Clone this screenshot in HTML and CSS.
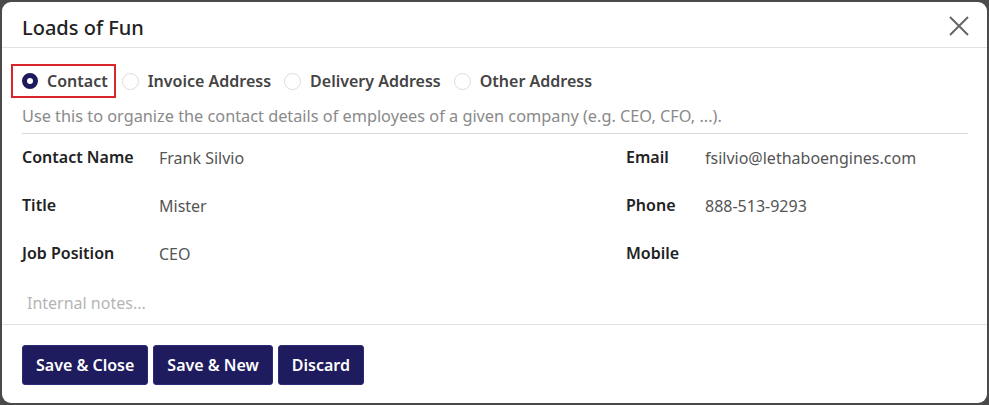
FILE: index.html
```html
<!DOCTYPE html>
<html>
<head>
<meta charset="utf-8">
<link rel="stylesheet" href="styles.css">
</head>
<body>
<div class="dialog">
  <header class="head">
    <h1 class="title">Loads of Fun</h1>
    <button class="close" aria-label="Close">
      <svg width="20" height="20" viewBox="0 0 20 20"><path d="M1 1 L19 19 M19 1 L1 19" stroke="#666" stroke-width="2" fill="none"/></svg>
    </button>
  </header>
  <main class="body">
    <div class="radios">
      <label class="radio highlighted"><span class="dot checked"></span>Contact</label>
      <label class="radio"><span class="dot"></span>Invoice Address</label>
      <label class="radio"><span class="dot"></span>Delivery Address</label>
      <label class="radio"><span class="dot"></span>Other Address</label>
    </div>
    <p class="hint">Use this to organize the contact details of employees of a given company (e.g. CEO, CFO, ...).</p>
    <div class="fields">
      <div class="col">
        <div class="row"><span class="label">Contact Name</span><span class="value">Frank Silvio</span></div>
        <div class="row"><span class="label">Title</span><span class="value">Mister</span></div>
        <div class="row"><span class="label">Job Position</span><span class="value">CEO</span></div>
      </div>
      <div class="col right">
        <div class="row"><span class="label">Email</span><span class="value">fsilvio@lethaboengines.com</span></div>
        <div class="row"><span class="label">Phone</span><span class="value">888-513-9293</span></div>
        <div class="row"><span class="label">Mobile</span><span class="value"></span></div>
      </div>
    </div>
    <div class="notes">Internal notes...</div>
  </main>
  <footer class="foot">
    <button class="btn">Save &amp; Close</button>
    <button class="btn">Save &amp; New</button>
    <button class="btn">Discard</button>
  </footer>
</div>
</body>
</html>
```
FILE: styles.css
```css
html, body { margin: 0; padding: 0; }
body {
  width: 989px;
  height: 405px;
  background: #4a4a4a;
  font-family: "Noto Sans", "Open Sans", sans-serif;
  box-sizing: border-box;
  padding: 2px;
}
.dialog {
  background: #fff;
  height: 401px;
  border-radius: 9px;
  display: flex;
  flex-direction: column;
  overflow: hidden;
}
.head {
  height: 45px;
  border-bottom: 1px solid #dee2e6;
  display: flex;
  align-items: center;
  justify-content: space-between;
  padding: 0 18px 0 20px;
  flex: none;
}
.title {
  margin: 0;
  font-size: 20px;
  font-weight: 500;
  color: #222;
  padding-top: 6px;
}
.close {
  border: 0;
  background: none;
  padding: 0;
  margin-top: 3px;
  display: flex;
}
.body {
  flex: 1;
  padding: 16px 19px 0 20px;
  border-bottom: 1px solid #dee2e6;
}
.radios {
  display: flex;
  align-items: center;
  height: 34px;
}
.radio {
  display: flex;
  align-items: center;
  gap: 9px;
  height: 34px;
  box-sizing: border-box;
  font-size: 16px;
  font-weight: 600;
  color: #444;
  border: 2px solid transparent;
  padding: 0;
  margin-left: 9px;
}
.radio.highlighted {
  border-color: #d9262a;
  margin-left: -11px;
  padding: 0 6px 0 9px;
  margin-right: -5px;
}
.dot {
  width: 17px;
  height: 17px;
  border-radius: 50%;
  border: 1px solid #dcdcdc;
  box-sizing: border-box;
  background: #fff;
  flex: none;
}
.dot.checked {
  width: 16px;
  height: 16px;
  border: 5px solid #1c1a5c;
}
.hint {
  margin: 7px 0 0;
  font-size: 16.3px;
  line-height: 22px;
  color: #8a8a8a;
  padding-bottom: 6px;
  border-bottom: 1px solid #d8d8d8;
}
.fields {
  display: flex;
  padding-top: 12px;
}
.col { flex: 1; }
.col.right { flex: none; width: 342px; }
.row {
  display: flex;
  height: 48px;
  font-size: 16px;
  line-height: 22px;
}
.label {
  font-weight: 600;
  color: #222;
  width: 137px;
  flex: none;
}
.right .label { width: 79px; }
.value {
  color: #555;
  padding-top: 1px;
}
.notes {
  color: #b5b5b5;
  font-size: 16px;
  line-height: 22px;
  margin-top: 2px;
  padding-left: 5px;
}
.foot {
  flex: none;
  height: 78px;
  display: flex;
  align-items: center;
  gap: 5px;
  padding: 0 20px;
}
.btn {
  height: 40px;
  background: #1e1b5e;
  color: #fff;
  border: 1px solid #2d2a78;
  border-radius: 3px;
  font-family: inherit;
  font-size: 16px;
  font-weight: 600;
  padding: 0 13px;
  margin-top: 1px;
}
```
